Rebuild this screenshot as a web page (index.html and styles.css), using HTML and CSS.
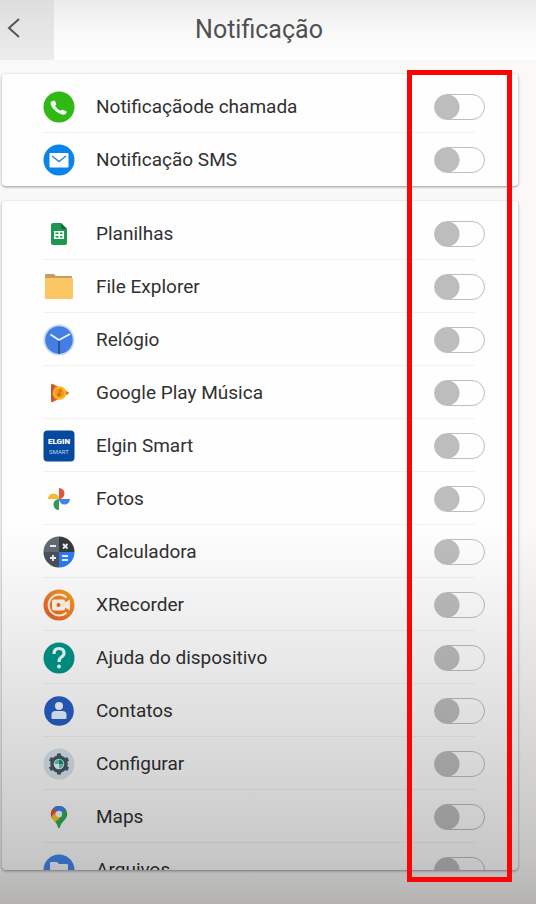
FILE: index.html
```html
<!DOCTYPE html>
<html lang="pt-BR">
<head>
<meta charset="utf-8">
<meta name="viewport" content="width=device-width, initial-scale=1">
<title>Notificação</title>
<link rel="stylesheet" href="styles.css">
</head>
<body>
<header class="header">
  <button class="back" type="button" aria-label="Voltar">
    <svg width="14" height="22" viewBox="0 0 14 22" fill="none" stroke="#555" stroke-width="2"><path d="M12 2 2 11l10 9"/></svg>
  </button>
  <h1 class="title">Notificação</h1>
</header>
<main class="content">
  <ul class="card">
    <li class="row">
      <svg class="icon" viewBox="0 0 32 32"><circle cx="16" cy="16" r="15.500" fill="#2fb915"/><path d="M8.500 10.500 11 9.500q1 0 1.500 1.500l.7 2q.2 1-1.200 1.800 2.500 3.700 5.600 5 1-1.300 2-1l3.400 1.100q1 .5.600 1.500-1 2.600-3.600 2.300C14 22.500 8 17 7.500 12q0-1 1-1.500z" fill="#f4fff0"/></svg>
      <label class="name" for="t1">Notificaçãode chamada</label>
      <input class="switch" type="checkbox" id="t1">
    </li>
    <li class="row">
      <svg class="icon" viewBox="0 0 32 32"><circle cx="16" cy="16" r="15.500" fill="#0b84ea"/><rect x="6.500" y="9" width="19" height="14.500" rx="1" fill="#fff"/><path d="m9 12 7 5.500 7-5.500" fill="none" stroke="#3288cb" stroke-width="1.500"/></svg>
      <label class="name" for="t2">Notificação SMS</label>
      <input class="switch" type="checkbox" id="t2">
    </li>
  </ul>
  <ul class="card card-apps">
    <li class="row">
      <svg class="icon" viewBox="0 0 32 32"><path d="M10 5h8l6 6v14q0 2-2 2H10q-2 0-2-2V7q0-2 2-2z" fill="#209653"/><path d="M18 5l6 6h-5q-1 0-1-1z" fill="#126d39"/><path d="M11 13h10v8H11z" fill="#f1fff5"/><path d="M12.500 14.500h3V16h-3zm4.500 0h2.500V16H17zm-4.500 3.500h3v1.500h-3zm4.500 0h2.500v1.500H17z" fill="#209653"/></svg>
      <label class="name" for="t3">Planilhas</label>
      <input class="switch" type="checkbox" id="t3">
    </li>
    <li class="row">
      <svg class="icon" viewBox="0 0 32 32"><path d="M2 4q0-1 1-1h8l2 2h15q1 0 1 1v5H2z" fill="#c79c5c"/><rect x="2" y="7" width="28" height="21" rx="1" fill="#fbc762"/></svg>
      <label class="name" for="t4">File Explorer</label>
      <input class="switch" type="checkbox" id="t4">
    </li>
    <li class="row">
      <svg class="icon" viewBox="0 0 32 32"><circle cx="16" cy="16" r="15.500" fill="#c6d8f5"/><circle cx="16" cy="16" r="13.800" fill="#437fe2"/><path d="M16 16v14" stroke="#28549e" stroke-width="2"/><path d="M7.500 10.500 16 16l11-6" fill="none" stroke="#e8f5ff" stroke-width="1.800"/></svg>
      <label class="name" for="t5">Relógio</label>
      <input class="switch" type="checkbox" id="t5">
    </li>
    <li class="row">
      <svg class="icon" viewBox="0 0 32 32"><path d="M8 8q0-2 2-1l15 8q2 1 0 2l-15 8q-2 1-2-1z" fill="#e7602d"/><path d="M8 9v15l3-1.500V8z" fill="#bd5643"/><circle cx="16.500" cy="16" r="6.800" fill="#ffb51c"/><circle cx="16.500" cy="16" r="4.500" fill="#fb9416"/><path d="M17 12.500v5M17 13h2" stroke="#c9651a" stroke-width="1.200"/><circle cx="15.800" cy="17.800" r="1.500" fill="#c9651a"/></svg>
      <label class="name" for="t6">Google Play Música</label>
      <input class="switch" type="checkbox" id="t6">
    </li>
    <li class="row">
      <svg class="icon" viewBox="0 0 32 32"><rect x=".5" y=".5" width="31" height="31" rx="4" fill="#054a9e"/><text class="brand" x="16" y="14" text-anchor="middle">ELGIN</text><text class="brand-sub" x="16" y="24" text-anchor="middle">SMART</text></svg>
      <label class="name" for="t7">Elgin Smart</label>
      <input class="switch" type="checkbox" id="t7">
    </li>
    <li class="row">
      <svg class="icon" viewBox="0 0 32 32"><path d="M16 5a5.500 5.500 0 0 1 0 11z" fill="#e2553f"/><path d="M27 16a5.500 5.500 0 0 1-11 0z" fill="#4285e8"/><path d="M16 27a5.500 5.500 0 0 1 0-11z" fill="#2c9c56"/><path d="M5 16a5.500 5.500 0 0 1 11 0z" fill="#f4bb2a"/></svg>
      <label class="name" for="t8">Fotos</label>
      <input class="switch" type="checkbox" id="t8">
    </li>
    <li class="row">
      <svg class="icon" viewBox="0 0 32 32"><path d="M16 .5V16H.5A15.500 15.500 0 0 1 16 .5z" fill="#646a72"/><path d="M16 .5A15.500 15.500 0 0 1 31.500 16H16z" fill="#363a40"/><path d="M.5 16H16v15.500A15.500 15.500 0 0 1 .5 16z" fill="#4b5159"/><path d="M16 16h15.500A15.500 15.500 0 0 1 16 31.500z" fill="#2b7cf2"/><path d="M7 10h6m7-2 4.500 4.500m0-4.500L20 12.500M10 19v6m-3-3h6m6-2h6m-6 4h6" stroke="#e9f1f5" stroke-width="1.800"/></svg>
      <label class="name" for="t9">Calculadora</label>
      <input class="switch" type="checkbox" id="t9">
    </li>
    <li class="row">
      <svg class="icon" viewBox="0 0 32 32"><defs><linearGradient id="rec" x1="1" y1="0" x2="0" y2="1"><stop stop-color="#f5a021"/><stop offset="1" stop-color="#e4572c"/></linearGradient></defs><circle cx="16" cy="16" r="15.500" fill="url(#rec)"/><path d="M23.500 8.500a10.500 10.500 0 1 0 0 15" fill="none" stroke="#fff1dc" stroke-width="2"/><rect x="9" y="10.500" width="13" height="11" rx="2" fill="#fff5e8"/><path d="m21 14 6-3.500v11L21 18z" fill="#fff5e8"/><circle cx="15.500" cy="16" r="2" fill="#dd682e"/></svg>
      <label class="name" for="t10">XRecorder</label>
      <input class="switch" type="checkbox" id="t10">
    </li>
    <li class="row">
      <svg class="icon" viewBox="0 0 32 32"><circle cx="16" cy="16" r="15.500" fill="#00968a"/><path d="M11 12q0-5.500 5-5.500t5 4.500q0 2.500-2.500 4T16 20" fill="none" stroke="#e9fffb" stroke-width="3.200"/><circle cx="16" cy="24.500" r="2" fill="#e9fffb"/></svg>
      <label class="name" for="t11">Ajuda do dispositivo</label>
      <input class="switch" type="checkbox" id="t11">
    </li>
    <li class="row">
      <svg class="icon" viewBox="0 0 32 32"><circle cx="16" cy="16" r="14.800" fill="#2560c4"/><circle cx="16" cy="11" r="4" fill="#f1f7ff"/><path d="M8.500 23v-3.500q0-3.500 4-3.500h7q4 0 4 3.500V23q0 1-1 1h-13q-1 0-1-1z" fill="#e8f2ff"/></svg>
      <label class="name" for="t12">Contatos</label>
      <input class="switch" type="checkbox" id="t12">
    </li>
    <li class="row">
      <svg class="icon" viewBox="0 0 32 32"><circle cx="16" cy="16" r="15.500" fill="#d9e5ec"/><circle cx="16" cy="16" r="7" fill="#f2f7f8" stroke="#465964" stroke-width="3.500"/><path d="M14 5.500h4v3h-4zm0 18h4v3h-4z" fill="#465964"/><path d="M14 5.500h4v3h-4zm0 18h4v3h-4z" fill="#465964" transform="rotate(60 16 16)"/><path d="M14 5.500h4v3h-4zm0 18h4v3h-4z" fill="#465964" transform="rotate(120 16 16)"/><path d="M16 16h-4.500A4.500 4.500 0 0 1 16 11.500zM16 16h4.500a4.500 4.500 0 0 1-4.500 4.500z" fill="#62c7ba"/><path d="M16 16v-4.500a4.500 4.500 0 0 1 4.500 4.500z" fill="#168d86"/></svg>
      <label class="name" for="t13">Configurar</label>
      <input class="switch" type="checkbox" id="t13">
    </li>
    <li class="row">
      <svg class="icon" viewBox="0 0 32 32"><defs><clipPath id="pin"><path d="M16 5a8 8 0 0 1 8.200 8c0 6-6 7-7.200 13.500q-1 1.500-2 0C13.800 20 7.800 19 7.800 13A8 8 0 0 1 16 5z"/></clipPath></defs><g clip-path="url(#pin)"><path d="M7 4h18v24H7z" fill="#2fac55"/><path d="m7 4 11-1-9 15H7z" fill="#e8503f"/><path d="m11 4 14-1v5l-9 5-6-6z" fill="#3e82eb"/><path d="M7 17 13 11l6 4-9 8z" fill="#fac42b"/></g><circle cx="16" cy="13" r="3.200" fill="#f5f8fb"/></svg>
      <label class="name" for="t14">Maps</label>
      <input class="switch" type="checkbox" id="t14">
    </li>
    <li class="row">
      <svg class="icon" viewBox="0 0 32 32"><circle cx="16" cy="16" r="15.500" fill="#448af0"/><path d="M7 9q0-1 1-1h6l2 2h8q1 0 1 1v11q0 1-1 1H8q-1 0-1-1z" fill="#f2f7ff"/></svg>
      <label class="name" for="t15">Arquivos</label>
      <input class="switch" type="checkbox" id="t15">
    </li>
  </ul>
  <div class="highlight"></div>
</main>
</body>
</html>
```
FILE: styles.css
```css
* {
  box-sizing: border-box;
}

body {
  display: flex;
  flex-direction: column;
  height: 100vh;
  margin: 0;
  overflow: hidden;
  background: #faf9f8;
  color: #303030;
  font-family: Roboto, "Liberation Sans", sans-serif;
}

/* Shade that falls over the lower half of the screen */
body::after {
  content: "";
  position: absolute;
  inset: 0;
  background: linear-gradient(transparent 58%, rgba(0, 0, 0, 0.1) 76%, rgba(0, 0, 0, 0.16) 86%, rgba(0, 0, 0, 0.22) 95%, rgba(0, 0, 0, 0.28) 100%);
  pointer-events: none;
}

.header {
  display: flex;
  align-items: center;
  height: 60px;
  padding-right: 72px;
  background: linear-gradient(#ebebeb, #f8f8f8 50%, #fefefe);
}

.back {
  display: flex;
  align-items: center;
  width: 54px;
  height: 60px;
  padding: 0 0 4px 7px;
  border: 0;
  background: linear-gradient(#dedede, #ececec);
}

.title {
  flex: 1;
  margin: 0;
  color: #505050;
  font-size: 25px;
  font-weight: 400;
  line-height: 30px;
  text-align: center;
}

.content {
  position: relative;
  display: flex;
  flex: 1;
  flex-direction: column;
  gap: 15px;
  min-height: 0;
  padding: 14px 18px 34px 2px;
}

.card {
  margin: 0;
  padding: 6px 33px 0 41px;
  border-radius: 4px;
  background: #fefefe;
  box-shadow: 0 1px 3px rgba(0, 0, 0, 0.4);
  list-style: none;
}

.card-apps {
  flex: 1;
  min-height: 0;
  overflow: hidden;
}

.row {
  display: flex;
  align-items: center;
  height: 53px;
  background: linear-gradient(#f1f1f1, #f1f1f1) 0 100% / calc(100% - 10px) 1px no-repeat;
}

.card:not(.card-apps) .row:last-child {
  background: none;
}

.icon {
  flex: none;
  width: 32px;
  height: 32px;
}

.brand,
.brand-sub {
  fill: #fff;
  font-size: 8px;
  font-weight: 900;
}

.brand-sub {
  fill: #b8d2ee;
  font-size: 6px;
  font-weight: 400;
}

.name {
  flex: 1;
  margin-left: 21px;
  font-size: 19px;
  line-height: 24px;
}

.switch {
  flex: none;
  width: 51px;
  height: 26px;
  margin: 0;
  border: 1px solid #bdbdbd;
  border-radius: 13px;
  appearance: none;
  background: radial-gradient(circle at 12px 12px, #bdbdbd 12px, transparent 13px);
}

.switch:checked {
  background: radial-gradient(circle at 37px 12px, #2fb915 12px, transparent 13px);
}

.highlight {
  position: absolute;
  z-index: 1;
  top: 10px;
  right: 24px;
  bottom: 22px;
  width: 105px;
  border: 5px solid #fc0404;
  pointer-events: none;
}
```
